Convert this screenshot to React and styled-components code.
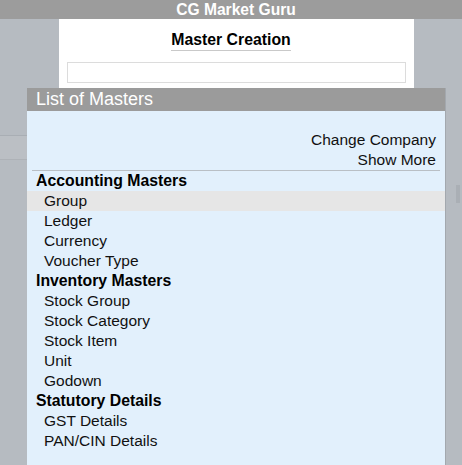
import React from 'react';
import styled, { createGlobalStyle } from 'styled-components';

const GlobalStyle = createGlobalStyle`
    html, body {
        margin: 0;
        padding: 0;
    }
    body {
        width: 462px;
        height: 465px;
        overflow: hidden;
        font-family: 'Liberation Sans', Arial, sans-serif;
        background:
            linear-gradient(#a9aeb4, #a9aeb4) 0 135px / 27px 1px no-repeat,
            linear-gradient(#bbbfc4, #bbbfc4) 0 136px / 27px 23px no-repeat,
            linear-gradient(#aeb2b7, #aeb2b7) 0 159px / 27px 1px no-repeat,
            #b6bbc1;
    }
`;

const accounting = ['Group', 'Ledger', 'Currency', 'Voucher Type'];
const inventory = ['Stock Group', 'Stock Category', 'Stock Item', 'Unit', 'Godown'];
const statutory = ['GST Details', 'PAN/CIN Details'];

const App = () => {
    return (
        <>
            <GlobalStyle />
            <Stage>
                <TopBar>CG Market Guru</TopBar>
                <CreationPanel>
                    <Heading>Master Creation</Heading>
                    <SearchBox />
                </CreationPanel>
                <ListPanel>
                    <ListHeader>List of Masters</ListHeader>
                    <ListBody>
                        <Action>Change Company</Action>
                        <Action last>Show More</Action>

                        <Group>Accounting Masters</Group>
                        {accounting.map((item, i) => (
                            <Item key={item} active={i === 0}>{item}</Item>
                        ))}

                        <Group>Inventory Masters</Group>
                        {inventory.map((item) => (
                            <Item key={item}>{item}</Item>
                        ))}

                        <Group>Statutory Details</Group>
                        {statutory.map((item) => (
                            <Item key={item}>{item}</Item>
                        ))}
                    </ListBody>
                </ListPanel>
            </Stage>
            <ScrollThumb />
        </>
    );
};

export default App;

// STYLE

const Stage = styled.div`
    width: 472px;
    display: flex;
    flex-direction: column;
    align-items: center;
`;

const TopBar = styled.div`
    align-self: stretch;
    height: 19px;
    line-height: 19px;
    background: #9c9c9c;
    color: #fff;
    font-size: 15.6px;
    font-weight: 700;
    text-align: center;
`;

const CreationPanel = styled.div`
    width: 355px;
    height: 69px;
    box-sizing: border-box;
    background: #fff;
    padding: 11px 8px 0;
    display: flex;
    flex-direction: column;
    align-items: center;
`;

const Heading = styled.h2`
    margin: 0 10px 0 0;
    font-size: 15.8px;
    font-weight: 700;
    line-height: 20px;
    color: #000;
    border-bottom: 1px solid #c9c9c9;
`;

const SearchBox = styled.div`
    margin-top: 11px;
    align-self: stretch;
    height: 21px;
    box-sizing: border-box;
    border: 1px solid #dcdcdc;
    background: #fff;
`;

const ListPanel = styled.div`
    width: 418px;
    height: 377px;
    display: flex;
    flex-direction: column;
    background: #e2f0fc;
    box-shadow: 1px 0 0 #a3a8ae;
`;

const ListHeader = styled.div`
    height: 23px;
    line-height: 23px;
    padding-left: 9px;
    background: #9b9b9b;
    color: #fff;
    font-size: 18px;
`;

const ListBody = styled.div`
    padding-top: 19px;
    display: flex;
    flex-direction: column;
    font-size: 15.5px;
    color: #111;
`;

const Action = styled.div`
    height: 20px;
    line-height: 20px;
    margin: 0 5px;
    padding-right: 4px;
    text-align: right;
    border-bottom: ${(p) => (p.last ? '1px solid #b9bfc5' : 'none')};
`;

const Group = styled.div`
    height: 20px;
    line-height: 20px;
    padding-left: 9px;
    font-size: 15.8px;
    font-weight: 700;
    color: #000;
`;

const Item = styled.div`
    height: 20px;
    line-height: 20px;
    padding-left: 17px;
    background: ${(p) => (p.active ? '#e6e6e6' : 'transparent')};
`;

const ScrollThumb = styled.div`
    position: absolute;
    left: 456px;
    top: 185px;
    width: 4px;
    height: 18px;
    background: #aaafb5;
`;
